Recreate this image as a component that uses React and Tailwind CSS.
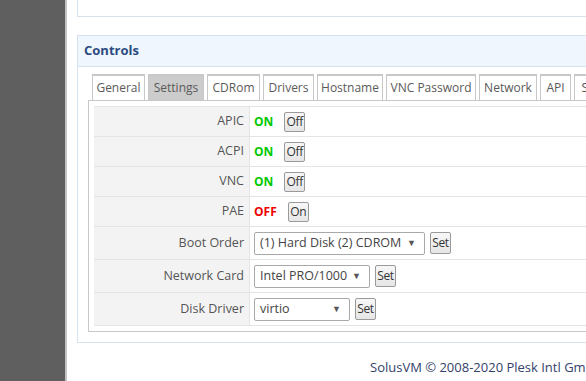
import React from "react";

const tabs = [
  { label: "General", w: "w-[53px]" },
  { label: "Settings", w: "w-[56px]", active: true },
  { label: "CDRom", w: "w-[53px]" },
  { label: "Drivers", w: "w-[51px]" },
  { label: "Hostname", w: "w-[66px]" },
  { label: "VNC Password", w: "w-[90px]" },
  { label: "Network", w: "w-[58px]" },
  { label: "API", w: "w-[31px]" },
  { label: "Status", w: "w-[50px]" },
];

const toggles = [
  { label: "APIC", on: true },
  { label: "ACPI", on: true },
  { label: "VNC", on: true },
  { label: "PAE", on: false },
];

const selects = [
  { label: "Boot Order", value: "(1) Hard Disk (2) CDROM", w: "w-[171px]" },
  { label: "Network Card", value: "Intel PRO/1000", w: "w-[116px]" },
  { label: "Disk Driver", value: "virtio", w: "w-[96px]" },
];

const SmallButton = ({ children, tall }) => (
  <button
    className={`inline-flex w-[21px] items-center justify-center rounded-[2px] border border-[#9a9a9a] bg-gradient-to-b from-[#f7f7f7] to-[#e6e6e6] px-0 text-[12px] leading-none tracking-[-0.3px] text-[#333] ${
      tall ? "h-[22px]" : "h-[20px]"
    }`}
  >
    {children}
  </button>
);

const Row = ({ label, tall, children }) => (
  <div className={`flex border-b border-[#e4e4e4] ${tall ? "h-[33px]" : "h-[30px]"}`}>
    <div className="flex w-[156px] shrink-0 items-center justify-end border-r border-[#e4e4e4] bg-[#f3f3f3] pr-[5px] text-[12.5px] text-[#555]">
      {label}
    </div>
    <div className="flex flex-1 items-center pl-[4px]">{children}</div>
  </div>
);

export default function App() {
  return (
    <div className="flex h-[381px] w-[586px] overflow-hidden bg-white font-['Open_Sans',sans-serif]">
      <div className="w-[65px] shrink-0 bg-[#5f5f5f]" />
      <div className="w-[2px] shrink-0 bg-[#c4c4c4]" />

      <div className="min-w-0 flex-1 pl-[10px]">
        <div className="h-[17px] w-[620px] border-b border-l border-[#d5e3ee]" />

        <div className="mt-[18px] w-[620px] border border-[#d5e3ee]">
          <div className="flex h-[31px] items-center border-b border-[#d5e3ee] bg-[#f0f6fd] pl-[6px] text-[13px] font-bold text-[#2b4b80]">
            Controls
          </div>

          <div className="px-[10px] pb-[10px] pt-[7px]">
            <div className="ml-[4px] flex gap-[3px]">
              {tabs.map((t) => (
                <div
                  key={t.label}
                  className={`flex h-[26px] shrink-0 items-center justify-center border-x border-t-2 border-[#c8c8c8] text-[12px] text-[#5a5a5a] ${t.w} ${
                    t.active ? "bg-[#cccccc]" : "bg-white"
                  }`}
                >
                  {t.label}
                </div>
              ))}
            </div>

            <div className="border border-[#c8c8c8] p-[5px]">
              <div className="border-t border-[#e4e4e4]">
                {toggles.map((t) => (
                  <Row key={t.label} label={t.label}>
                    <span
                      className={`text-[12px] font-bold ${
                        t.on ? "text-[#00c800]" : "text-[#ee0000]"
                      }`}
                    >
                      {t.on ? "ON" : "OFF"}
                    </span>
                    <span className="ml-[11px] flex">
                      <SmallButton>{t.on ? "Off" : "On"}</SmallButton>
                    </span>
                  </Row>
                ))}
                {selects.map((s) => (
                  <Row key={s.label} label={s.label} tall>
                    <div
                      className={`flex h-[23px] items-center justify-between rounded-[2px] border border-[#a9a9a9] bg-white pl-[5px] pr-[8px] text-[12.5px] text-[#444] ${s.w}`}
                    >
                      <span className="whitespace-nowrap">{s.value}</span>
                      <span className="text-[9px] text-[#555]">▼</span>
                    </div>
                    <span className="ml-[5px] flex">
                      <SmallButton tall>Set</SmallButton>
                    </span>
                  </Row>
                ))}
              </div>
            </div>
          </div>
        </div>

        <div className="mt-[15px] whitespace-nowrap pl-[293px] text-[13px] text-[#34426a]">
          SolusVM © 2008-2020 Plesk Intl GmbH
        </div>
      </div>
    </div>
  );
}
